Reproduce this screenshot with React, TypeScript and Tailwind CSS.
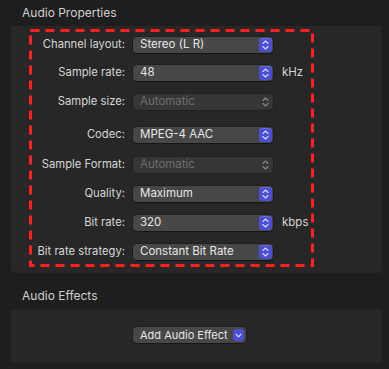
import React from 'react';

type Row = {
  label: string;
  value: string;
  disabled?: boolean;
  unit?: string;
  gap: string;
};

const rows: Row[] = [
  { label: 'Channel layout:', value: 'Stereo (L R)', gap: 'mt-0' },
  { label: 'Sample rate:', value: '48', unit: 'kHz', gap: 'mt-[12px]' },
  { label: 'Sample size:', value: 'Automatic', disabled: true, gap: 'mt-[13px]' },
  { label: 'Codec:', value: 'MPEG-4 AAC', gap: 'mt-[17px]' },
  { label: 'Sample Format:', value: 'Automatic', disabled: true, gap: 'mt-[14px]' },
  { label: 'Quality:', value: 'Maximum', gap: 'mt-[13px]' },
  { label: 'Bit rate:', value: '320', unit: 'kbps', gap: 'mt-[13px]' },
  { label: 'Bit rate strategy:', value: 'Constant Bit Rate', gap: 'mt-[13px]' },
];

const Stepper = ({ disabled }: { disabled?: boolean }) => (
  <div
    className={
      disabled
        ? 'flex h-[14px] w-[13px] items-center justify-center'
        : 'flex h-[14px] w-[13px] items-center justify-center rounded-[3px] bg-[#4b4fd6] shadow-[inset_0_1px_0_rgba(255,255,255,0.15)]'
    }
  >
    <svg width="7" height="10" viewBox="0 0 7 10" fill="none">
      <path
        d="M1 3.5 L3.5 1 L6 3.5 M1 6.5 L3.5 9 L6 6.5"
        stroke={disabled ? '#8a8a8a' : '#d8dbff'}
        strokeWidth="1.1"
        strokeLinecap="round"
        strokeLinejoin="round"
      />
    </svg>
  </div>
);

const Popup = ({ value, disabled }: { value: string; disabled?: boolean }) => (
  <div
    className={
      disabled
        ? 'flex h-[16px] w-[140px] items-center justify-between rounded-[4px] bg-[#363636] pl-[7px] pr-[1px] shadow-[0_0_0_0.5px_rgba(0,0,0,0.35)]'
        : 'flex h-[16px] w-[140px] items-center justify-between rounded-[4px] bg-[#474747] pl-[7px] pr-[1px] shadow-[0_0_0_0.5px_rgba(0,0,0,0.4),0_1px_1px_rgba(0,0,0,0.3)]'
    }
  >
    <span className={disabled ? 'text-[11.5px] leading-none text-[#6e6e6e]' : 'text-[11.5px] leading-none text-[#e6e6e6]'}>
      {value}
    </span>
    <Stepper disabled={disabled} />
  </div>
);

export default function App() {
  return (
    <div
      className="h-[369px] w-[389px] bg-[#1e1e1e] pl-[11px] pr-[7px] pt-[5px] text-[#d6d6d6]"
      style={{ fontFamily: 'Inter, "Noto Sans", sans-serif' }}
    >
      {/* Audio Properties */}
      <div className="pl-[11px] text-[12px] leading-[16px] text-[#d0d0d0]">Audio Properties</div>
      <div className="mt-[5px] rounded-[3px] bg-[#272727] pb-[6px] pl-[18px] pt-[3px]">
        <div className="relative h-[238px] w-[285px] pt-[8px]">
          {/* red dashed annotation */}
          <svg className="pointer-events-none absolute inset-0" width="285" height="238">
            <rect
              x="1.5"
              y="1.5"
              width="282"
              height="235"
              fill="none"
              stroke="#ff1f1f"
              strokeWidth="3"
              strokeDasharray="9 6"
            />
          </svg>
          {rows.map((r) => (
            <div key={r.label} className={`${r.gap} flex h-[16px] items-center`}>
              <div className="w-[96px] whitespace-nowrap text-right text-[11.25px] leading-none text-[#d6d6d6]">{r.label}</div>
              <div className="ml-[8px]">
                <Popup value={r.value} disabled={r.disabled} />
              </div>
              {r.unit && <div className="ml-[9px] text-[11.5px] leading-none text-[#d6d6d6]">{r.unit}</div>}
            </div>
          ))}
        </div>
      </div>

      {/* Audio Effects */}
      <div className="mt-[15px] pl-[11px] text-[12px] leading-[16px] text-[#d0d0d0]">Audio Effects</div>
      <div className="mt-[5px] h-[54px] rounded-[3px] bg-[#272727] pl-[122px] pt-[18px]">
        <div className="flex h-[16px] w-[113px] items-center justify-between rounded-[4px] bg-[#474747] pl-[7px] pr-[2px] shadow-[0_0_0_0.5px_rgba(0,0,0,0.4),0_1px_1px_rgba(0,0,0,0.3)]">
          <span className="whitespace-nowrap text-[11px] leading-none text-[#e6e6e6]">Add Audio Effect</span>
          <div className="flex h-[12px] w-[11px] items-center justify-center rounded-[3px] bg-[#4b4fd6]">
            <svg width="7" height="5" viewBox="0 0 7 5" fill="none">
              <path d="M1 1.2 L3.5 3.8 L6 1.2" stroke="#d8dbff" strokeWidth="1.2" strokeLinecap="round" strokeLinejoin="round" />
            </svg>
          </div>
        </div>
      </div>
    </div>
  );
}
